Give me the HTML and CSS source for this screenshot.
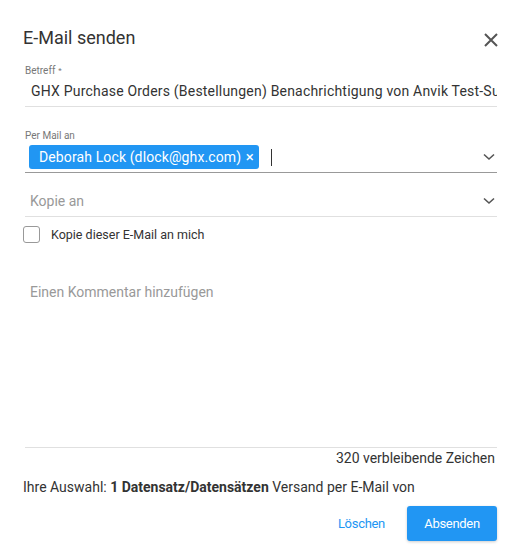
FILE: index.html
```html
<!DOCTYPE html>
<html lang="de">
<head>
  <meta charset="UTF-8" />
  <title>E-Mail senden</title>
  <link rel="stylesheet" href="styles.css">
</head>
<body>
  <div class="dialog">
    <div class="dialog-header">
      <h2>E-Mail senden</h2>
      <svg class="close" width="14" height="14" viewBox="0 0 14 14">
        <path d="M1 1 L13 13 M13 1 L1 13" stroke="#555" stroke-width="2" fill="none"/>
      </svg>
    </div>

    <div class="fields">
      <div class="field subject">
        <label>Betreff<sup>*</sup></label>
        <div class="value">GHX Purchase Orders (Bestellungen) Benachrichtigung von Anvik Test-Supplier</div>
      </div>

      <div class="field to">
        <label>Per Mail an</label>
        <div class="select-row">
          <span class="chip">Deborah Lock (dlock@ghx.com) <span class="chip-x">×</span></span>
          <span class="caret"></span>
          <svg class="chevron" width="12" height="8" viewBox="0 0 12 8">
            <path d="M1 1.5 L6 6 L11 1.5" stroke="#555" stroke-width="1.6" fill="none"/>
          </svg>
        </div>
      </div>

      <div class="field cc">
        <div class="select-row">
          <span class="placeholder">Kopie an</span>
          <svg class="chevron" width="12" height="8" viewBox="0 0 12 8">
            <path d="M1 1.5 L6 6 L11 1.5" stroke="#555" stroke-width="1.6" fill="none"/>
          </svg>
        </div>
      </div>

      <div class="check-row">
        <span class="checkbox"></span>
        <span>Kopie dieser E-Mail an mich</span>
      </div>

      <div class="comment">
        <span class="placeholder">Einen Kommentar hinzufügen</span>
      </div>
      <div class="counter">320 verbleibende Zeichen</div>
    </div>

    <p class="selection">Ihre Auswahl: <b>1 Datensatz/Datensätzen</b> Versand per E-Mail von</p>

    <div class="actions">
      <button class="btn-link">Löschen</button>
      <button class="btn-primary">Absenden</button>
    </div>
  </div>
</body>
</html>
```

FILE: styles.css
```css
body {
  margin: 0;
  background: #fff;
  font-family: Roboto, "Liberation Sans", sans-serif;
  color: #333;
}

.dialog {
  width: 528px;
  height: 559px;
  padding: 0 31px 0 23px;
  box-sizing: border-box;
}

.dialog-header {
  display: flex;
  align-items: center;
  justify-content: space-between;
  padding-top: 26px;
  height: 24px;
}

.dialog-header h2 {
  margin: 0;
  font-size: 18px;
  font-weight: 400;
  line-height: 24px;
  color: #333;
}

.close {
  margin-right: -1px;
  margin-top: 4px;
}

.fields {
  padding-left: 2px;
  margin-top: 15px;
}

.field label {
  display: block;
  font-size: 10px;
  color: #777;
  line-height: 12px;
}

.field label sup {
  font-size: 8px;
  vertical-align: top;
  margin-left: 3px;
}

.subject .value {
  font-size: 14px;
  letter-spacing: 0.2px;
  line-height: 20px;
  padding: 4px 0 5px 6px;
  white-space: nowrap;
  overflow: hidden;
  border-bottom: 1px solid #e0e0e0;
}

.to {
  margin-top: 23px;
}

.select-row {
  display: flex;
  align-items: center;
}

.to .select-row {
  padding: 3px 0 3px 4px;
  border-bottom: 1px solid #999;
}

.chip {
  background: #2196f3;
  color: #fff;
  font-size: 14px;
  letter-spacing: 0.12px;
  line-height: 24px;
  padding: 0 5px 0 10px;
  border-radius: 3px;
}

.chip-x {
  margin-left: 1px;
  font-size: 15px;
}

.caret {
  width: 1px;
  height: 17px;
  background: #333;
  margin-left: 12px;
}

.chevron {
  margin-left: auto;
  margin-right: 2px;
}

.cc .select-row {
  margin-top: 12px;
  height: 31px;
  padding-left: 5px;
  border-bottom: 1px solid #e0e0e0;
}

.placeholder {
  font-size: 14px;
  color: #999;
}

.check-row {
  display: flex;
  align-items: center;
  gap: 11px;
  margin-top: 9px;
  font-size: 12.5px;
  margin-left: -2px;
}

.checkbox {
  width: 15px;
  height: 15px;
  border: 1px solid #999;
  border-radius: 3px;
}

.comment {
  height: 205px;
  padding: 39px 0 0 5px;
  box-sizing: border-box;
  border-bottom: 1px solid #e0e0e0;
}

.counter {
  text-align: right;
  font-size: 14px;
  padding-top: 2px;
  padding-right: 2px;
}

.selection {
  margin: 12px 0 0;
  font-size: 14px;
  line-height: 18px;
}

.actions {
  display: flex;
  justify-content: flex-end;
  align-items: center;
  gap: 22px;
  margin-top: 10px;
}

.actions button {
  font-family: inherit;
  font-size: 13px;
  letter-spacing: -0.3px;
  border: none;
  cursor: pointer;
}

.btn-link {
  background: none;
  color: #2196f3;
  padding: 0;
}

.btn-primary {
  background: #2196f3;
  color: #fff;
  width: 90px;
  height: 35px;
  border-radius: 3px;
  box-shadow: 0 1px 3px rgba(0,0,0,0.2);
}
```
